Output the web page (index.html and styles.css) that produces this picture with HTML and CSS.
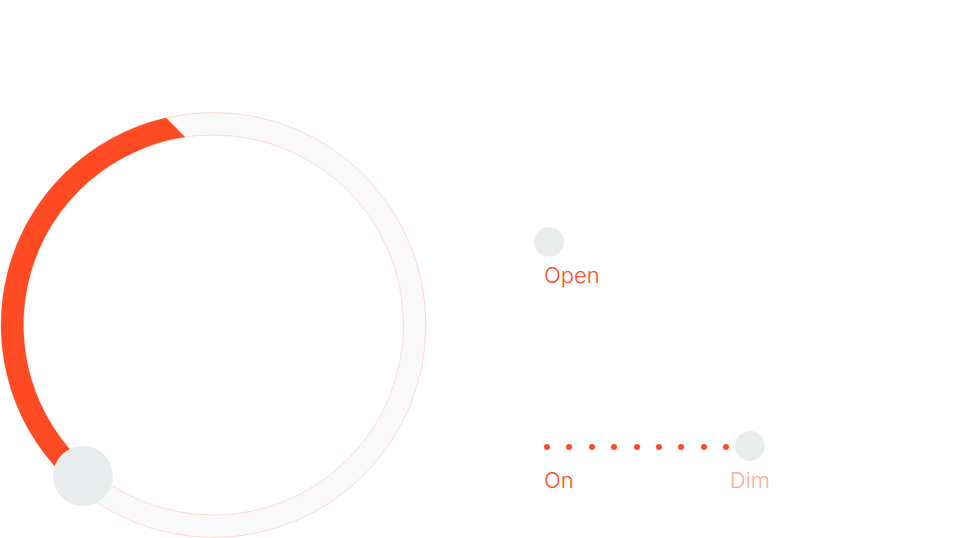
FILE: index.html
```html
<!DOCTYPE html>
<html>
<head>
<meta charset="utf-8">
<link rel="stylesheet" href="styles.css">
</head>
<body>
<div class="stage">
  <svg class="dial" width="430" height="538" viewBox="0 0 430 538">
    <circle cx="213.5" cy="325" r="201.25" fill="none" stroke="#F8F9F8" stroke-width="22.5"/>
    <circle cx="213.5" cy="325" r="212.5" fill="none" stroke="#FDC3B5" stroke-width="0.6"/>
    <circle cx="213.5" cy="325" r="190" fill="none" stroke="#FDC3B5" stroke-width="0.6"/>
    <path d="M74.65 485.9 A212.5 212.5 0 0 1 166.05 117.85 L185.1 137.1 A190 190 0 0 0 89.35 468.8 Z" fill="#FF4B24"/>
    <circle cx="83" cy="476" r="30" fill="#E8ECEC"/>
  </svg>
  <div class="controls">
    <div class="toggle">
      <div class="knob"></div>
      <div class="label">Open</div>
    </div>
    <div class="slider">
      <div class="track">
        <span class="dot"></span><span class="dot"></span><span class="dot"></span>
        <span class="dot"></span><span class="dot"></span><span class="dot"></span>
        <span class="dot"></span><span class="dot"></span><span class="dot"></span>
        <div class="knob"></div>
      </div>
      <div class="labels">
        <span class="label">On</span>
        <span class="label dim">Dim</span>
      </div>
    </div>
  </div>
</div>
</body>
</html>
```

FILE: styles.css
```css
* { box-sizing: border-box; }
html, body {
  margin: 0;
  padding: 0;
  background: #ffffff;
  width: 953px;
  height: 538px;
  overflow: hidden;
  font-family: "Inter", "Lato", sans-serif;
}
.stage {
  display: flex;
  align-items: flex-start;
}
.dial { display: block; flex: none; }
.controls {
  display: flex;
  flex-direction: column;
  margin-left: 104px;
  padding-top: 227px;
}
.knob {
  width: 30px;
  height: 30px;
  border-radius: 50%;
  background: #E8ECEC;
  flex: none;
}
.label {
  font-size: 22px;
  font-weight: 300;
  color: #FF4B24;
  line-height: 24px;
}
.toggle .label {
  margin-left: 10px;
  margin-top: 6px;
}
.slider {
  margin-top: 145px;
  margin-left: 10px;
}
.track {
  display: flex;
  align-items: center;
  gap: 16.4px;
}
.dot {
  width: 6px;
  height: 6px;
  border-radius: 50%;
  background: #FF4B24;
  flex: none;
}
.track .knob {
  margin-left: -10.4px;
  position: relative;
  top: -1px;
}
.labels {
  display: flex;
  justify-content: space-between;
  width: 226px;
  margin-top: 6px;
}
.dim { color: #FFA89A; }
```
